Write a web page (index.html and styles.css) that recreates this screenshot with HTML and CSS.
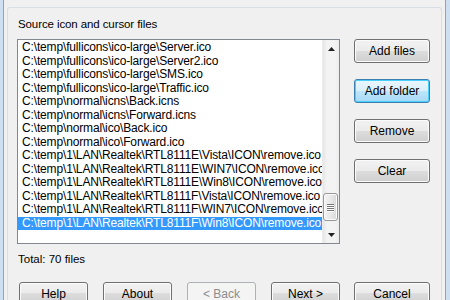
FILE: index.html
```html
<!DOCTYPE html>
<html lang="en">
  <head>
    <meta charset="UTF-8" />
    <title>Source icon and cursor files</title>
    <link rel="stylesheet" href="styles.css">
  </head>
  <body>
    <div class="frame">
      <div class="page">
        <!-- Source list -->
        <div class="section-label">Source icon and cursor files</div>

        <div class="top-row">
          <div class="listbox">
            <ul class="items">
              <li>C:\temp\fullicons\ico-large\Server.ico</li>
              <li>C:\temp\fullicons\ico-large\Server2.ico</li>
              <li>C:\temp\fullicons\ico-large\SMS.ico</li>
              <li>C:\temp\fullicons\ico-large\Traffic.ico</li>
              <li>C:\temp\normal\icns\Back.icns</li>
              <li>C:\temp\normal\icns\Forward.icns</li>
              <li>C:\temp\normal\ico\Back.ico</li>
              <li>C:\temp\normal\ico\Forward.ico</li>
              <li>C:\temp\1\LAN\Realtek\RTL8111E\Vista\ICON\remove.ico</li>
              <li>C:\temp\1\LAN\Realtek\RTL8111E\WIN7\ICON\remove.ico</li>
              <li>C:\temp\1\LAN\Realtek\RTL8111E\Win8\ICON\remove.ico</li>
              <li>C:\temp\1\LAN\Realtek\RTL8111F\Vista\ICON\remove.ico</li>
              <li>C:\temp\1\LAN\Realtek\RTL8111F\WIN7\ICON\remove.ico</li>
              <li class="selected">C:\temp\1\LAN\Realtek\RTL8111F\Win8\ICON\remove.ico</li>
            </ul>

            <div class="scrollbar">
              <div class="arrow">
                <svg width="7" height="4" viewBox="0 0 7 4"><polygon points="3.5,0 7,4 0,4" fill="#222"/></svg>
              </div>
              <div class="track">
                <div class="thumb">
                  <span></span><span></span><span></span><span></span>
                </div>
              </div>
              <div class="arrow">
                <svg width="7" height="4" viewBox="0 0 7 4"><polygon points="0,0 7,0 3.5,4" fill="#222"/></svg>
              </div>
            </div>
          </div>

          <div class="side-buttons">
            <button class="btn">Add files</button>
            <button class="btn btn-default">Add folder</button>
            <button class="btn">Remove</button>
            <button class="btn">Clear</button>
          </div>
        </div>

        <div class="total">Total: 70 files</div>

        <!-- Wizard buttons -->
        <div class="bottom-row">
          <button class="btn btn-wide">Help</button>
          <button class="btn btn-wide">About</button>
          <button class="btn btn-wide" disabled>&lt; Back</button>
          <button class="btn btn-wide">Next &gt;</button>
          <button class="btn btn-cancel">Cancel</button>
        </div>
      </div>
    </div>
  </body>
</html>
```

FILE: styles.css
```css
/* Base */
* {
  margin: 0;
  padding: 0;
  box-sizing: border-box;
}

body {
  width: 450px;
  height: 300px;
  overflow: hidden;
  background: #cddff1;
  font-family: "Liberation Sans", Arial, sans-serif;
  font-size: 11.5px;
  color: #000;
}

/* Window */
.frame {
  margin: 0 4px 0 3px;
  height: 300px;
  background: #f0f0f0;
  border-left: 1px solid #8fa3b9;
  border-right: 1px solid #8fa3b9;
  padding: 7px 3px 0 3px;
}

.page {
  height: 100%;
  border: 1px solid #d5dfe5;
  border-bottom: none;
  border-radius: 3px 3px 0 0;
  padding: 9px 0 0 9px;
}

.section-label {
  line-height: 14px;
  margin-left: 1px;
  letter-spacing: -0.1px;
}

/* List + side buttons */
.top-row {
  display: flex;
  gap: 14px;
  margin-top: 8px;
}

.listbox {
  width: 323px;
  height: 205px;
  background: #fff;
  border: 1px solid #828790;
  display: flex;
}

.items {
  list-style: none;
  flex: 1;
  min-width: 0;
  padding-top: 1px;
  font-size: 12px;
  letter-spacing: -0.15px;
}

.items li {
  height: 13.5px;
  line-height: 13.5px;
  padding-left: 4px;
  white-space: nowrap;
  overflow: hidden;
}

.items li.selected {
  background: #3399ff;
  color: #fff;
}

/* Scrollbar */
.scrollbar {
  width: 17px;
  display: flex;
  flex-direction: column;
  background: linear-gradient(to right, #e6e6e6, #f3f3f3 25%, #f3f3f3 75%, #ececec);
  border-left: 1px solid #ececec;
}

.arrow {
  height: 17px;
  display: flex;
  align-items: center;
  justify-content: center;
}

.track {
  flex: 1;
  position: relative;
}

.thumb {
  position: absolute;
  left: 0;
  right: 1px;
  top: 136px;
  height: 28px;
  border: 1px solid #979797;
  border-radius: 3px;
  background: linear-gradient(to right, #f4f4f4, #e9e9e9 50%, #d8d8d8);
  box-shadow: inset 0 0 0 1px #fbfbfb;
  display: flex;
  flex-direction: column;
  align-items: center;
  justify-content: center;
  gap: 1px;
}

.thumb span {
  width: 7px;
  height: 1px;
  background: #777;
  box-shadow: 0 1px 0 #fff;
}

.side-buttons {
  display: flex;
  flex-direction: column;
  gap: 16px;
}

/* Buttons */
.btn {
  width: 76px;
  height: 24px;
  font-family: inherit;
  font-size: 12px;
  color: #000;
  border: 1px solid #707070;
  border-radius: 3px;
  background: linear-gradient(#f2f2f2 0%, #ebebeb 50%, #dddddd 50%, #cfcfcf 100%);
  box-shadow: inset 0 0 0 1px #fbfbfb;
}

.btn-default {
  border-color: #3c7fb1;
  background: linear-gradient(#eaf6fd 0%, #d9f0fc 50%, #bee6fd 50%, #a7d9f5 100%);
  box-shadow: inset 0 0 0 1px #48d0fc;
}

.btn:disabled {
  color: #8c8c8c;
  border-color: #adb2b5;
  background: #f4f4f4;
  box-shadow: none;
}

.total {
  line-height: 14px;
  margin: 8px 0 0 1px;
}

.bottom-row {
  display: flex;
  gap: 15px;
  margin: 16px 0 0 2px;
}

.btn-wide {
  width: 69px;
  height: 23px;
}

.btn-cancel {
  height: 23px;
  margin-left: -1px;
}
```
